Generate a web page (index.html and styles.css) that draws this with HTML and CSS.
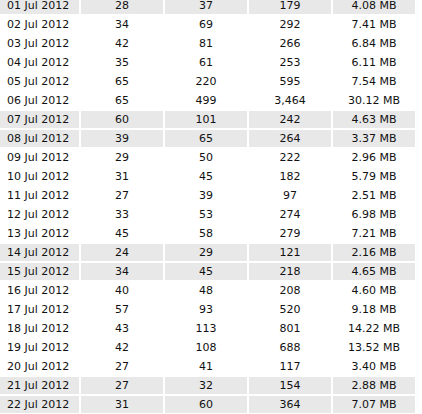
FILE: index.html
```html
<!DOCTYPE html>
<html>
<head>
<meta charset="utf-8">
<link rel="stylesheet" href="styles.css">
</head>
<body>
<table class="stats">
<colgroup><col class="c"><col class="c"><col class="c"><col class="c"><col class="c"></colgroup>
<tbody>
<tr class="we"><td class="date">01 Jul 2012</td><td>28</td><td>37</td><td>179</td><td>4.08 MB</td></tr>
<tr><td class="date">02 Jul 2012</td><td>34</td><td>69</td><td>292</td><td>7.41 MB</td></tr>
<tr><td class="date">03 Jul 2012</td><td>42</td><td>81</td><td>266</td><td>6.84 MB</td></tr>
<tr><td class="date">04 Jul 2012</td><td>35</td><td>61</td><td>253</td><td>6.11 MB</td></tr>
<tr><td class="date">05 Jul 2012</td><td>65</td><td>220</td><td>595</td><td>7.54 MB</td></tr>
<tr><td class="date">06 Jul 2012</td><td>65</td><td>499</td><td>3,464</td><td>30.12 MB</td></tr>
<tr class="we"><td class="date">07 Jul 2012</td><td>60</td><td>101</td><td>242</td><td>4.63 MB</td></tr>
<tr class="we"><td class="date">08 Jul 2012</td><td>39</td><td>65</td><td>264</td><td>3.37 MB</td></tr>
<tr><td class="date">09 Jul 2012</td><td>29</td><td>50</td><td>222</td><td>2.96 MB</td></tr>
<tr><td class="date">10 Jul 2012</td><td>31</td><td>45</td><td>182</td><td>5.79 MB</td></tr>
<tr><td class="date">11 Jul 2012</td><td>27</td><td>39</td><td>97</td><td>2.51 MB</td></tr>
<tr><td class="date">12 Jul 2012</td><td>33</td><td>53</td><td>274</td><td>6.98 MB</td></tr>
<tr><td class="date">13 Jul 2012</td><td>45</td><td>58</td><td>279</td><td>7.21 MB</td></tr>
<tr class="we"><td class="date">14 Jul 2012</td><td>24</td><td>29</td><td>121</td><td>2.16 MB</td></tr>
<tr class="we"><td class="date">15 Jul 2012</td><td>34</td><td>45</td><td>218</td><td>4.65 MB</td></tr>
<tr><td class="date">16 Jul 2012</td><td>40</td><td>48</td><td>208</td><td>4.60 MB</td></tr>
<tr><td class="date">17 Jul 2012</td><td>57</td><td>93</td><td>520</td><td>9.18 MB</td></tr>
<tr><td class="date">18 Jul 2012</td><td>43</td><td>113</td><td>801</td><td>14.22 MB</td></tr>
<tr><td class="date">19 Jul 2012</td><td>42</td><td>108</td><td>688</td><td>13.52 MB</td></tr>
<tr><td class="date">20 Jul 2012</td><td>27</td><td>41</td><td>117</td><td>3.40 MB</td></tr>
<tr class="we"><td class="date">21 Jul 2012</td><td>27</td><td>32</td><td>154</td><td>2.88 MB</td></tr>
<tr class="we"><td class="date">22 Jul 2012</td><td>31</td><td>60</td><td>364</td><td>7.07 MB</td></tr>
</tbody>
</table>
</body>
</html>
```
FILE: styles.css
```css
html, body {
  margin: 0;
  padding: 0;
  background: #fff;
}
body {
  font-family: "DejaVu Sans", Verdana, sans-serif;
  font-size: 11px;
  color: #111;
  overflow: hidden;
}
.stats {
  border-collapse: separate;
  border-spacing: 2px;
  table-layout: fixed;
  width: 422px;
  margin: -5px 0 0 -5px;
}
.stats .c {
  width: 82px;
}
.stats td {
  height: 17px;
  padding: 0;
  line-height: 17px;
  text-align: center;
  white-space: nowrap;
}
.stats td.date {
  text-align: left;
  padding-left: 10px;
}
.stats tr.we td {
  background: #e8e8e8;
}
```
